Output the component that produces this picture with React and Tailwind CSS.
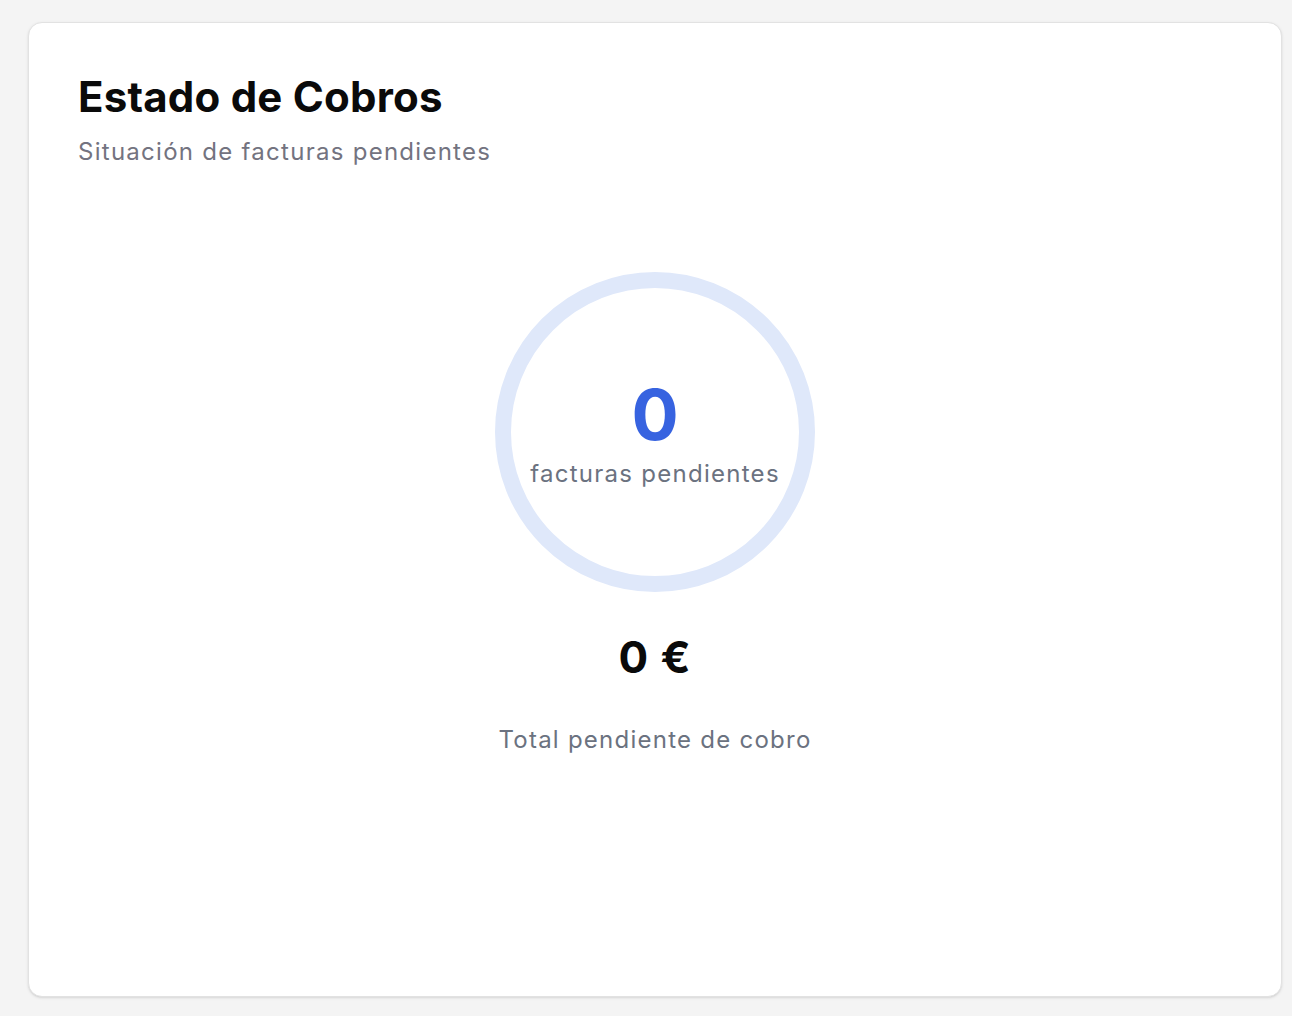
export default function App() {
  return (
    <div className="min-h-screen bg-[#f4f4f4] pt-[22px] pr-[10px] pb-[19px] pl-[28px] font-['Inter',sans-serif]">
      <div className="flex h-[975px] flex-col rounded-[14px] border border-[#e2e2e2] bg-white px-[49px] pt-[50px] shadow-sm">
        <h2 className="text-[42px] leading-[48px] font-bold tracking-[0.005em] text-[#0a0a0a]">
          Estado de Cobros
        </h2>
        <p className="mt-[15px] text-[24px] leading-[32px] tracking-[0.053em] text-[#737380]">
          Situación de facturas pendientes
        </p>

        <div className="mt-[104px] flex flex-col items-center">
          <div className="flex h-[320px] w-[320px] flex-col items-center justify-center rounded-full border-[16px] border-[#dfe8fa]">
            <span className="text-[70px] leading-[80px] font-bold text-[#3763e0]">0</span>
            <span className="mt-[3px] text-[24px] leading-[32px] tracking-[0.053em] text-[#6b7280]">
              facturas pendientes
            </span>
          </div>
          <p className="mt-[39px] text-[44px] leading-[52px] font-bold tracking-[0.02em] text-[#0a0a0a]">0 €</p>
          <p className="mt-[41px] text-[24px] leading-[32px] tracking-[0.052em] text-[#6b7280]">
            Total pendiente de cobro
          </p>
        </div>
      </div>
    </div>
  );
}
